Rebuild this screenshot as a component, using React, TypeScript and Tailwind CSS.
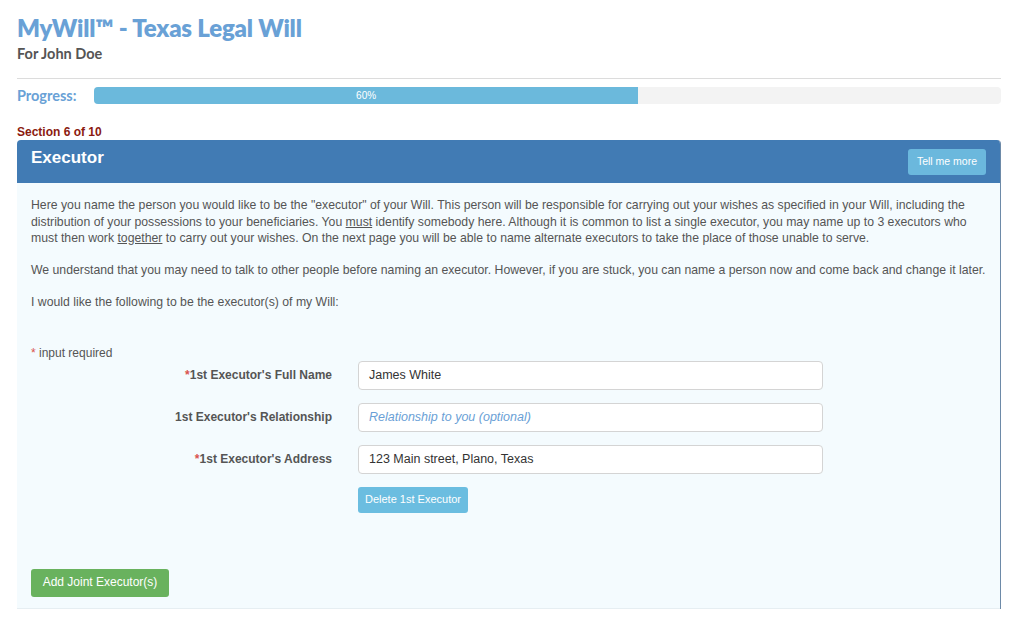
export default function App() {
  const body = "font-['Liberation_Sans',Arial,sans-serif]";
  return (
    <div className="w-[1024px] h-[617px] bg-white overflow-hidden">
      <div className="ml-[17px] w-[984px] pt-[13px]">
        <h1 className="font-['Lato',sans-serif] font-extrabold text-[24px] leading-[30px] text-[#69a1d6] tracking-[-0.2px]">
          MyWill™ - Texas Legal Will
        </h1>
        <div className="font-['Lato',sans-serif] font-bold text-[14.5px] leading-[18px] text-[#555] mt-[2px]">
          For John Doe
        </div>
        <div className="mt-[15px] border-t border-[#dcdcdc]" />
        <div className="flex items-center mt-[8px] h-[17px]">
          <div className="w-[77px] font-['Lato',sans-serif] font-bold text-[14.5px] text-[#69a1d6]">Progress:</div>
          <div className="flex-1 h-[17px] rounded-[4px] bg-[#f3f3f3] overflow-hidden">
            <div className={`h-full w-[60%] bg-[#6bb9dc] flex items-center justify-center text-white text-[10px] ${body}`}>
              60%
            </div>
          </div>
        </div>
        <div className={`mt-[21px] ${body} font-bold text-[12px] leading-[14px] text-[#8b1a0f]`}>
          Section 6 of 10
        </div>
        <div className="mt-[1px] rounded-t-[4px] overflow-hidden border-r border-[#6d8aa8]">
          <div className="h-[43px] bg-[#417bb4] flex items-center justify-between pl-[14px] pr-[14px]">
            <div className={`${body} font-bold text-[17px] text-white -mt-[8px]`}>Executor</div>
            <div className={`h-[26px] w-[78px] rounded-[3px] bg-[#6bb8dd] flex items-center justify-center text-white text-[10.5px] ${body}`}>
              Tell me more
            </div>
          </div>
          <div className={`bg-[#f4fbfe] border-b border-[#e6eef2] px-[14px] pt-[14px] pb-[11px] ${body} text-[12.25px] leading-[16.5px] text-[#555]`}>
            <p>
              Here you name the person you would like to be the "executor" of your Will. This person will be responsible for carrying out your wishes as specified in your Will, including the distribution of your possessions to your beneficiaries. You <u>must</u> identify somebody here. Although it is common to list a single executor, you may name up to 3 executors who must then work <u>together</u> to carry out your wishes. On the next page you will be able to name alternate executors to take the place of those unable to serve.
            </p>
            <p className="mt-[15.5px]">
              We understand that you may need to talk to other people before naming an executor. However, if you are stuck, you can name a person now and come back and change it later.
            </p>
            <p className="mt-[15.5px]">I would like the following to be the executor(s) of my Will:</p>
            <div className="mt-[35px] text-[12px] leading-[14px]">
              <span className="text-[#d9534f]">*</span> input required
            </div>
            <div className="mt-[1px] flex flex-col gap-[13px]">
              <Row label="1st Executor's Full Name" required value="James White" />
              <Row label="1st Executor's Relationship" placeholder="Relationship to you (optional)" />
              <Row label="1st Executor's Address" required value="123 Main street, Plano, Texas" />
              <div className="pl-[327px]">
                <div className="h-[26px] w-[110px] rounded-[3px] bg-[#6bbde0] flex items-center justify-center text-white text-[11px]">
                  Delete 1st Executor
                </div>
              </div>
            </div>
            <div className="mt-[56px] h-[28px] w-[138px] rounded-[3px] bg-[#69b25e] flex items-center justify-center text-white text-[12px]">
              Add Joint Executor(s)
            </div>
          </div>
        </div>
      </div>
    </div>
  );
}

function Row({ label, required, value, placeholder }: { label: string; required?: boolean; value?: string; placeholder?: string }) {
  return (
    <div className="flex items-center">
      <div className="w-[301px] text-right font-bold text-[12px] text-[#555]">
        {required && <span className="text-[#d9534f]">*</span>}
        {label}
      </div>
      <div className="ml-[26px] w-[465px] h-[29px] rounded-[4px] border border-[#d4d4d4] bg-white flex items-center px-[10px] text-[12.5px]">
        {value ? (
          <span className="text-[#333]">{value}</span>
        ) : (
          <span className="italic text-[#6a9fd6]">{placeholder}</span>
        )}
      </div>
    </div>
  );
}
